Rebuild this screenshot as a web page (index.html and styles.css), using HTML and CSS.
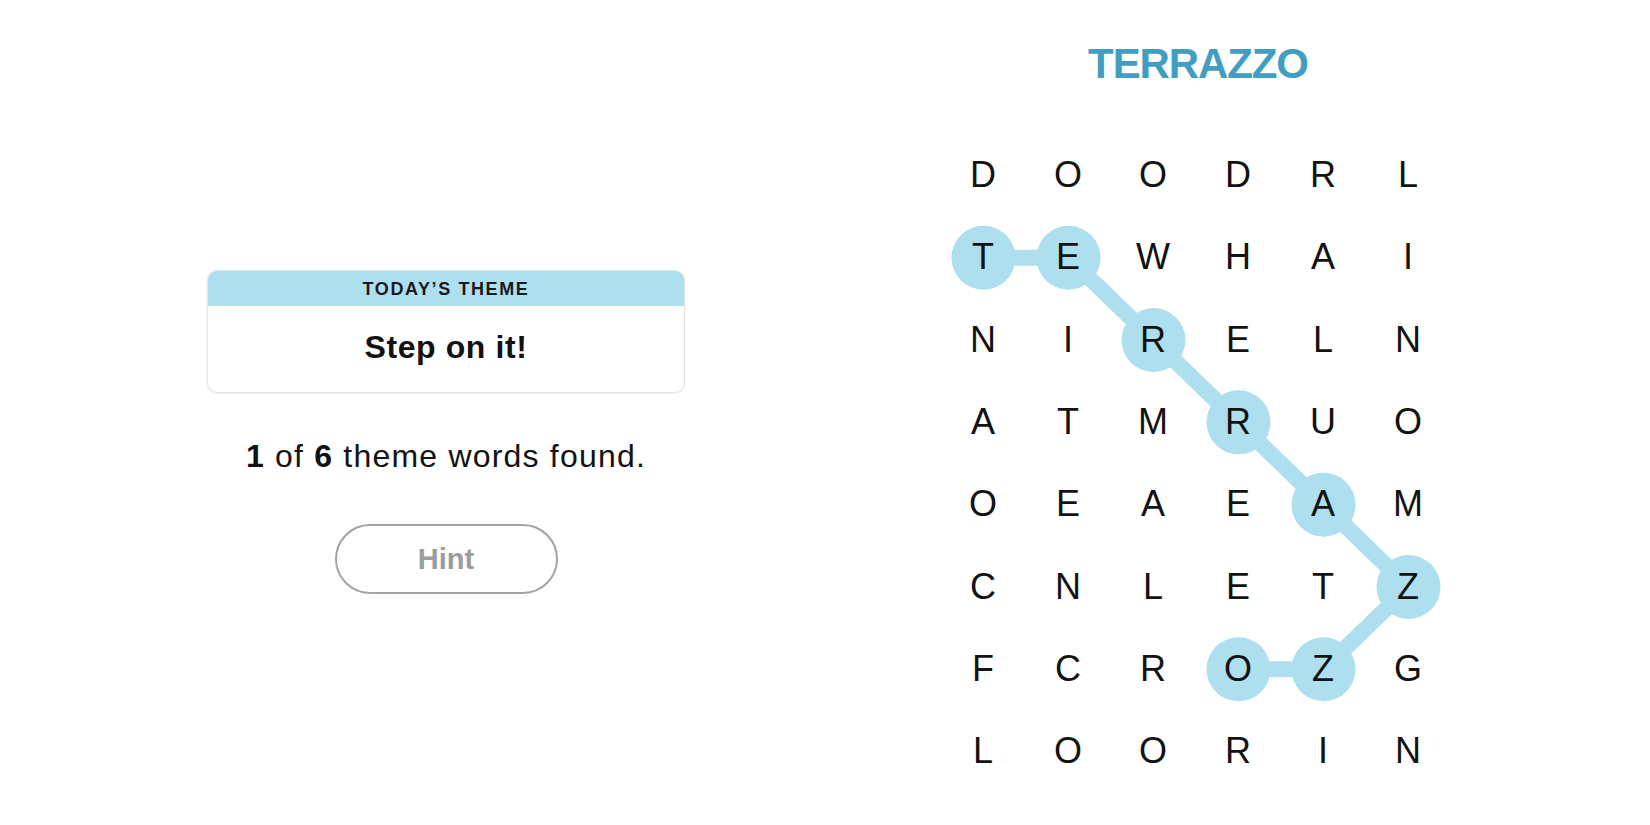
FILE: index.html
```html
<!DOCTYPE html>
<html lang="en">
<head>
<meta charset="utf-8">
<title>Strands</title>
<link rel="stylesheet" href="styles.css">
</head>
<body>
<main class="game">
  <section class="left">
    <div class="theme-card">
      <div class="theme-head">TODAY’S THEME</div>
      <div class="theme-body">Step on it!</div>
    </div>
    <p class="found"><b>1</b> of <b>6</b> theme words found.</p>
    <button class="hint" type="button">Hint</button>
  </section>
  <section class="right">
    <h1 class="word">TERRAZZO</h1>
    <div class="board">
      <svg class="path" width="510" height="659" viewBox="0 0 510 658.4" aria-hidden="true">
        <polyline points="42.5,123.45 127.5,123.45 212.5,205.75 297.5,288.05 382.5,370.35 467.5,452.65 382.5,534.95 297.5,534.95" fill="none" stroke="#aedfee" stroke-width="16" stroke-linejoin="round" stroke-linecap="round"/>
        <g fill="#aedfee">
          <circle cx="42.5" cy="123.45" r="32"/>
          <circle cx="127.5" cy="123.45" r="32"/>
          <circle cx="212.5" cy="205.75" r="32"/>
          <circle cx="297.5" cy="288.05" r="32"/>
          <circle cx="382.5" cy="370.35" r="32"/>
          <circle cx="467.5" cy="452.65" r="32"/>
          <circle cx="382.5" cy="534.95" r="32"/>
          <circle cx="297.5" cy="534.95" r="32"/>
        </g>
      </svg>
      <div class="grid">
        <span>D</span><span>O</span><span>O</span><span>D</span><span>R</span><span>L</span>
        <span>T</span><span>E</span><span>W</span><span>H</span><span>A</span><span>I</span>
        <span>N</span><span>I</span><span>R</span><span>E</span><span>L</span><span>N</span>
        <span>A</span><span>T</span><span>M</span><span>R</span><span>U</span><span>O</span>
        <span>O</span><span>E</span><span>A</span><span>E</span><span>A</span><span>M</span>
        <span>C</span><span>N</span><span>L</span><span>E</span><span>T</span><span>Z</span>
        <span>F</span><span>C</span><span>R</span><span>O</span><span>Z</span><span>G</span>
        <span>L</span><span>O</span><span>O</span><span>R</span><span>I</span><span>N</span>
      </div>
    </div>
  </section>
</main>
</body>
</html>
```

FILE: styles.css
```css
* { box-sizing: border-box; }

html, body {
  margin: 0;
  padding: 0;
  background: #ffffff;
  color: #121212;
  font-family: "Liberation Sans", Arial, sans-serif;
}

.game {
  display: flex;
  width: 1650px;
  height: 825px;
}

.left {
  width: 892px;
  display: flex;
  flex-direction: column;
  align-items: center;
  padding-top: 270px;
}

.theme-card {
  width: 478px;
  border: 1px solid #e2e2e2;
  border-radius: 10px;
  overflow: hidden;
  box-shadow: 0 1px 2px rgba(0,0,0,0.06);
}

.theme-head {
  height: 35px;
  background: #aedfee;
  display: flex;
  align-items: center;
  justify-content: center;
  font-size: 18px;
  font-weight: 700;
  letter-spacing: 1.6px;
  color: #1a1a1a;
  padding-top: 1px;
}

.theme-body {
  height: 86px;
  display: flex;
  align-items: center;
  justify-content: center;
  font-size: 32px;
  font-weight: 700;
  letter-spacing: 0.6px;
  padding-bottom: 4px;
}

.found {
  margin: 45px 0 0;
  font-size: 32px;
  line-height: 36px;
  letter-spacing: 1.2px;
}

.found b { font-weight: 700; }

.hint {
  margin-top: 50px;
  width: 223px;
  height: 70px;
  border: 2px solid #a3a3a3;
  border-radius: 35px;
  background: #fff;
  color: #9c9c9c;
  font-family: "Liberation Sans", Arial, sans-serif;
  font-size: 29px;
  font-weight: 700;
  padding: 0;
}

.right {
  width: 608px;
  display: flex;
  flex-direction: column;
  align-items: center;
}

.word {
  margin: 38px 0 0;
  height: 52px;
  font-size: 42px;
  line-height: 52px;
  font-weight: 700;
  color: #419ec2;
  letter-spacing: -1.1px;
  padding-left: 4px;
}

.board {
  position: relative;
  margin-top: 44px;
  margin-left: -1px;
  width: 510px;
  height: 658.4px;
}

.path {
  position: absolute;
  left: 0;
  top: 0;
}

.grid {
  position: relative;
  display: grid;
  grid-template-columns: repeat(6, 85px);
  grid-template-rows: repeat(8, 82.3px);
}

.grid span {
  display: flex;
  align-items: center;
  justify-content: center;
  font-size: 36px;
  line-height: 1;
  color: #121212;
}
```
